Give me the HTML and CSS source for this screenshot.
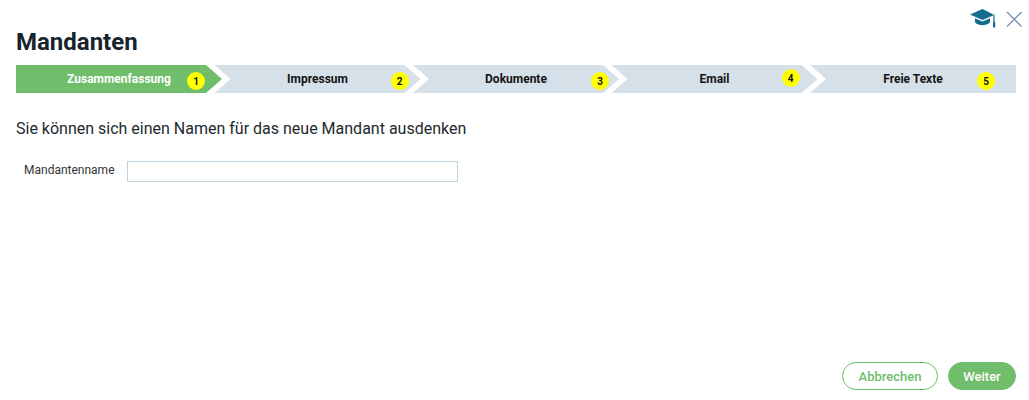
FILE: index.html
```html
<!DOCTYPE html>
<html lang="de">
<head>
<meta charset="utf-8">
<title>Mandanten</title>
<link rel="stylesheet" href="styles.css">
</head>
<body>
<div class="dialog">
  <div class="tools">
    <svg class="cap" width="27" height="19" viewBox="0 0 27 19">
      <path class="cap-fill" d="M12.5 0 L0 5.5 L12.5 11 L23 6.4 L23 5.2 Z"/>
      <path class="cap-fill" d="M5 9.2 L5 13.2 C7 15.5 10 16.2 12.5 16.2 C15 16.2 18 15.5 20 13.2 L20 9.2 L12.5 12.6 Z"/>
      <path class="cap-fill" d="M23.4 5.6 H24.6 V13 H23.4 Z M23 13 H25.2 V18.5 H23 Z"/>
    </svg>
    <svg class="close" width="18" height="18" viewBox="0 0 18 18">
      <path d="M2 2 L16.5 16.5 M16.5 2 L2 16.5"/>
    </svg>
  </div>
  <h1 class="title">Mandanten</h1>
  <ol class="stepper">
    <li class="step step-active step-one">Zusammenfassung<span class="badge badge-1">1</span></li>
    <li class="step">Impressum<span class="badge badge-2">2</span></li>
    <li class="step">Dokumente<span class="badge badge-3">3</span></li>
    <li class="step">Email<span class="badge badge-4">4</span></li>
    <li class="step step-last">Freie Texte<span class="badge badge-5">5</span></li>
  </ol>
  <p class="intro">Sie können sich einen Namen für das neue Mandant ausdenken</p>
  <div class="field">
    <label class="field-label" for="name">Mandantenname</label>
    <input class="field-input" id="name" type="text">
  </div>
  <div class="actions">
    <button class="btn btn-outline" type="button">Abbrechen</button>
    <button class="btn btn-solid" type="button">Weiter</button>
  </div>
</div>
</body>
</html>
```
FILE: styles.css
```css
* { box-sizing: border-box; }
html, body { margin: 0; height: 100%; background: #fff; }
body { font-family: Roboto, "Liberation Sans", sans-serif; color: #1f2a30; overflow: hidden; }
.dialog { height: 400px; padding: 8px 13px 10px 16px; display: flex; flex-direction: column; }
.tools { display: flex; justify-content: flex-end; align-items: flex-start; gap: 8px; height: 20px; margin-right: -7px; }
.cap { margin-top: 1px; }
.cap-fill { fill: #146c8f; }
.close { margin-top: 2px; }
.close path { stroke: #7c92ad; stroke-width: 1.4; fill: none; }
.title { margin: 0; font-size: 24px; line-height: 28px; font-weight: 700; color: #17242b; }
.stepper { list-style: none; margin: 9px 3px 0 0; padding: 0; display: flex; height: 28px; }
.step {
  position: relative; flex: 0 0 206px; margin-left: -7.5px;
  display: flex; align-items: center; justify-content: center;
  font-size: 12px; font-weight: 700; color: #141414; padding-bottom: 1px;
  background: #d5e0e8;
  clip-path: polygon(0 0, 190px 0, 206px 50%, 190px 100%, 0 100%, 16px 50%);
}
.step-one { margin-left: 0; clip-path: polygon(0 0, 190px 0, 206px 50%, 190px 100%, 0 100%); }
.step-last { clip-path: polygon(0 0, 100% 0, 100% 100%, 0 100%, 16px 50%); }
.step-active { background: #70bd6c; color: #fff; }
.badge {
  position: absolute; width: 18px; height: 18px; border-radius: 50%;
  background: #ffff00; color: #141414; font-size: 10px; font-weight: 700;
  display: flex; align-items: center; justify-content: center;
}
.badge-1 { left: 171px; top: 7px; }
.badge-2 { left: 176px; top: 7px; }
.badge-3 { left: 178px; top: 7px; }
.badge-4 { left: 170px; top: 4px; }
.badge-5 { left: 167px; top: 7px; }
.intro { margin: 26px 0 0; font-size: 16px; line-height: 20px; color: #22292e; }
.field { display: flex; align-items: center; margin-top: 22px; }
.field-label { width: 111px; padding-left: 8px; font-size: 12px; color: #333; padding-bottom: 3px; }
.field-input { width: 331px; height: 21px; border: 1px solid #bcd4de; background: #fff; padding: 0 4px; outline: none; }
.actions { margin-top: auto; display: flex; justify-content: flex-end; gap: 10px; }
.btn { height: 28px; border-radius: 14px; font: 500 13px Roboto, "Liberation Sans", sans-serif; padding: 0; }
.btn-outline { width: 96px; background: #fff; border: 1px solid #70bd6c; color: #70bd6c; }
.btn-solid { width: 68px; background: #70bd6c; border: 1px solid #70bd6c; color: #fff; }
```
